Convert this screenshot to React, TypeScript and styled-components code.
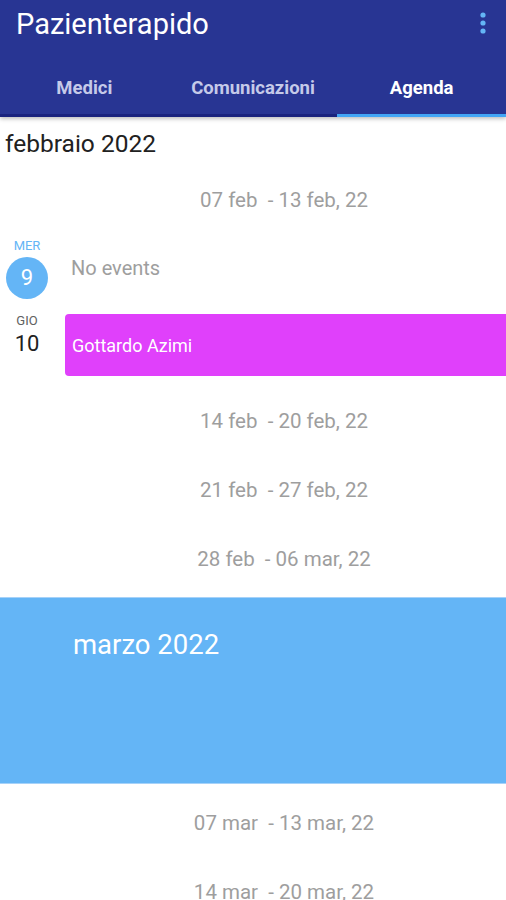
import React from "react";
import styled, { createGlobalStyle } from "styled-components";

const GlobalStyle = createGlobalStyle`
  html, body {
    margin: 0;
    padding: 0;
    background: #ffffff;
  }
  body {
    font-family: Roboto, "Noto Sans", "Liberation Sans", sans-serif;
  }
`;

const Page = styled.div`
  width: 506px;
  height: 900px;
  overflow: hidden;
  display: flex;
  flex-direction: column;
  background: #ffffff;
`;

const AppBar = styled.header`
  background: #283593;
  box-shadow: 0 2px 4px rgba(0, 0, 0, 0.25);
  position: relative;
  z-index: 1;
`;

const TitleRow = styled.div`
  height: 57px;
  display: flex;
  align-items: flex-start;
  justify-content: space-between;
  padding: 8px 0 0 16px;
  box-sizing: border-box;
`;

const Title = styled.h1`
  margin: 0;
  font-size: 29px;
  line-height: 32px;
  font-weight: 400;
  color: #ffffff;
`;

const MenuButton = styled.button`
  width: 40px;
  height: 40px;
  margin-top: -5px;
  margin-right: 3px;
  border: 0;
  background: transparent;
  display: flex;
  align-items: center;
  justify-content: center;
  padding: 0;
`;

const Tabs = styled.nav`
  height: 57px;
  display: flex;
  border-bottom: 3px solid #1a237e;
`;

const Tab = styled.div<{ $active?: boolean }>`
  flex: 1;
  display: flex;
  align-items: center;
  justify-content: center;
  padding-top: 2px;
  font-size: 18.5px;
  font-weight: 700;
  color: ${(p) => (p.$active ? "#ffffff" : "#c5cae9")};
  box-shadow: ${(p) => (p.$active ? "inset 0 -3px 0 #42a5f5" : "none")};
  margin-bottom: -3px;
`;

const Content = styled.main`
  display: flex;
  flex-direction: column;
`;

const MonthTitle = styled.div`
  height: 48px;
  padding: 13px 0 0 5px;
  box-sizing: border-box;
  font-size: 24.5px;
  line-height: 28px;
  color: #212121;
`;

const WeekLabel = styled.div`
  height: 69px;
  display: flex;
  align-items: center;
  justify-content: center;
  padding-left: 62px;
  font-size: 20.5px;
  color: #9e9e9e;
  white-space: pre;
`;

const DayRow = styled.div<{ $bottom: number }>`
  display: flex;
  align-items: flex-start;
  padding: 4px 0 ${(p) => p.$bottom}px;
`;

const DayCol = styled.div`
  width: 54px;
  flex-shrink: 0;
  display: flex;
  flex-direction: column;
  align-items: center;
`;

const WeekDay = styled.div<{ $today?: boolean }>`
  margin-top: ${(p) => (p.$today ? "1px" : "0")};
  font-size: 13px;
  line-height: 14px;
  color: ${(p) => (p.$today ? "#64b5f6" : "#616161")};
`;

const DayNumber = styled.div<{ $today?: boolean }>`
  margin-top: ${(p) => (p.$today ? "4px" : "3px")};
  width: ${(p) => (p.$today ? "42px" : "auto")};
  height: ${(p) => (p.$today ? "42px" : "26px")};
  border-radius: 50%;
  background: ${(p) => (p.$today ? "#64b5f6" : "transparent")};
  color: ${(p) => (p.$today ? "#ffffff" : "#212121")};
  font-size: 22px;
  line-height: ${(p) => (p.$today ? "42px" : "26px")};
  text-align: center;
`;

const NoEvents = styled.div`
  margin: 19px 0 0 17px;
  font-size: 20px;
  line-height: 22px;
  color: #9e9e9e;
`;

const EventCard = styled.div<{ $color: string }>`
  flex: 1;
  height: 62px;
  margin-left: 11px;
  padding-left: 7px;
  display: flex;
  align-items: center;
  background: ${(p) => p.$color};
  border-radius: 4px 0 0 4px;
  color: #ffffff;
  font-size: 18px;
`;

const MonthBanner = styled.div`
  height: 187px;
  margin: 4px 0;
  box-sizing: border-box;
  padding: 33px 0 0 73px;
  background: #64b5f6;
  border-top: 1px solid #a6d2f9;
  border-bottom: 1px solid #a6d2f9;
  color: #ffffff;
  font-size: 27.5px;
  line-height: 28px;
`;

const MoreIcon = () => (
  <svg width="10" height="26" viewBox="0 0 10 26">
    <circle cx="5" cy="5" r="2.6" fill="#64b5f6" />
    <circle cx="5" cy="13" r="2.6" fill="#64b5f6" />
    <circle cx="5" cy="21" r="2.6" fill="#64b5f6" />
  </svg>
);

const tabs = ["Medici", "Comunicazioni", "Agenda"];

const App = () => (
  <>
    <GlobalStyle />
    <Page>
      <AppBar>
        <TitleRow>
          <Title>Pazienterapido</Title>
          <MenuButton aria-label="menu">
            <MoreIcon />
          </MenuButton>
        </TitleRow>
        <Tabs>
          {tabs.map((t) => (
            <Tab key={t} $active={t === "Agenda"}>
              {t}
            </Tab>
          ))}
        </Tabs>
      </AppBar>
      <Content>
        <MonthTitle>febbraio 2022</MonthTitle>
        <WeekLabel>{"07 feb  - 13 feb, 22"}</WeekLabel>
        <DayRow $bottom={11}>
          <DayCol>
            <WeekDay $today>MER</WeekDay>
            <DayNumber $today>9</DayNumber>
          </DayCol>
          <NoEvents>No events</NoEvents>
        </DayRow>
        <DayRow $bottom={10}>
          <DayCol>
            <WeekDay>GIO</WeekDay>
            <DayNumber>10</DayNumber>
          </DayCol>
          <EventCard $color="#e040fb">Gottardo Azimi</EventCard>
        </DayRow>
        <WeekLabel>{"14 feb  - 20 feb, 22"}</WeekLabel>
        <WeekLabel>{"21 feb  - 27 feb, 22"}</WeekLabel>
        <WeekLabel>{"28 feb  - 06 mar, 22"}</WeekLabel>
        <MonthBanner>marzo 2022</MonthBanner>
        <WeekLabel>{"07 mar  - 13 mar, 22"}</WeekLabel>
        <WeekLabel>{"14 mar  - 20 mar, 22"}</WeekLabel>
      </Content>
    </Page>
  </>
);

export default App;
